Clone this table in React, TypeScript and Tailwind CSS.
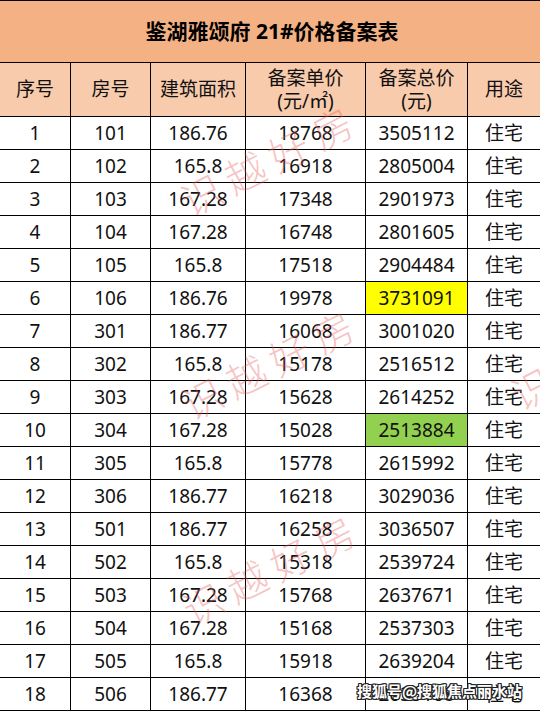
import React from "react";

const rows: [string, string, string, string, string, string?][] = [
  ["1", "101", "186.76", "18768", "3505112"],
  ["2", "102", "165.8", "16918", "2805004"],
  ["3", "103", "167.28", "17348", "2901973"],
  ["4", "104", "167.28", "16748", "2801605"],
  ["5", "105", "165.8", "17518", "2904484"],
  ["6", "106", "186.76", "19978", "3731091", "y"],
  ["7", "301", "186.77", "16068", "3001020"],
  ["8", "302", "165.8", "15178", "2516512"],
  ["9", "303", "167.28", "15628", "2614252"],
  ["10", "304", "167.28", "15028", "2513884", "g"],
  ["11", "305", "165.8", "15778", "2615992"],
  ["12", "306", "186.77", "16218", "3029036"],
  ["13", "501", "186.77", "16258", "3036507"],
  ["14", "502", "165.8", "15318", "2539724"],
  ["15", "503", "167.28", "15768", "2637671"],
  ["16", "504", "167.28", "15168", "2537303"],
  ["17", "505", "165.8", "15918", "2639204"],
  ["18", "506", "186.77", "16368", "2635168"],
];

const font = { fontFamily: '"Noto Sans", "Noto Sans CJK SC", sans-serif' };

function Watermark({ x, y }: { x: number; y: number }) {
  return (
    <div
      className="absolute whitespace-nowrap text-[40px] leading-none tracking-[9px] text-[rgba(230,85,85,0.36)] select-none pointer-events-none"
      style={{
        left: x,
        top: y,
        transform: "translate(-50%, -50%) rotate(-27deg)",
        fontFamily: '"Noto Sans CJK SC", serif',
        fontWeight: 300,
      }}
    >
      识越好房
    </div>
  );
}

export default function App() {
  const cell = "border border-black text-center p-0 text-[19px] text-[#111]";
  return (
    <div className="relative w-[540px] h-[711px] overflow-hidden bg-white" style={font}>
      <table className="border-collapse table-fixed w-[541px] -ml-px">
        <colgroup>
          <col className="w-[71px]" />
          <col className="w-[80px]" />
          <col className="w-[95px]" />
          <col className="w-[120px]" />
          <col className="w-[102px]" />
          <col className="w-[73px]" />
        </colgroup>
        <thead>
          <tr className="h-[62px]">
            <th
              colSpan={6}
              className="border border-black bg-[#f4b183] text-[21px] font-bold text-black text-center pl-[4px]"
            >
              鉴湖雅颂府 21#价格备案表
            </th>
          </tr>
          <tr className="h-[54px]">
            <th className={`${cell} bg-[#f8cbad] font-normal`}>序号</th>
            <th className={`${cell} bg-[#f8cbad] font-normal`}>房号</th>
            <th className={`${cell} bg-[#f8cbad] font-normal`}>建筑面积</th>
            <th className={`${cell} bg-[#f8cbad] font-normal leading-[23px]`}>
              <div>备案单价</div>
              <div>(元/㎡)</div>
            </th>
            <th className={`${cell} bg-[#f8cbad] font-normal leading-[23px]`}>
              <div>备案总价</div>
              <div>(元)</div>
            </th>
            <th className={`${cell} bg-[#f8cbad] font-normal`}>用途</th>
          </tr>
        </thead>
        <tbody>
          {rows.map((r) => (
            <tr key={r[0]} className="h-[33px]">
              <td className={cell}>{r[0]}</td>
              <td className={cell}>{r[1]}</td>
              <td className={cell}>{r[2]}</td>
              <td className={cell}>{r[3]}</td>
              <td
                className={`${cell} ${
                  r[5] === "y" ? "bg-[#ffff00]" : r[5] === "g" ? "bg-[#92d050]" : ""
                }`}
              >
                {r[4]}
              </td>
              <td className={cell}>住宅</td>
            </tr>
          ))}
        </tbody>
      </table>
      <Watermark x={270} y={158} />
      <Watermark x={271} y={362} />
      <Watermark x={272} y={567} />
      <Watermark x={600} y={352} />
      <div
        className="absolute left-[357px] top-[683px] whitespace-nowrap text-[15px] font-bold text-white leading-none"
        style={{
          fontFamily: '"Noto Sans CJK SC", sans-serif',
          textShadow:
            "1px 0 0 #222, -1px 0 0 #222, 0 1px 0 #222, 0 -1px 0 #222, 1px 1px 0 #222, -1px -1px 0 #222, 1px -1px 0 #222, -1px 1px 0 #222",
        }}
      >
        搜狐号@搜狐焦点丽水站
      </div>
    </div>
  );
}
